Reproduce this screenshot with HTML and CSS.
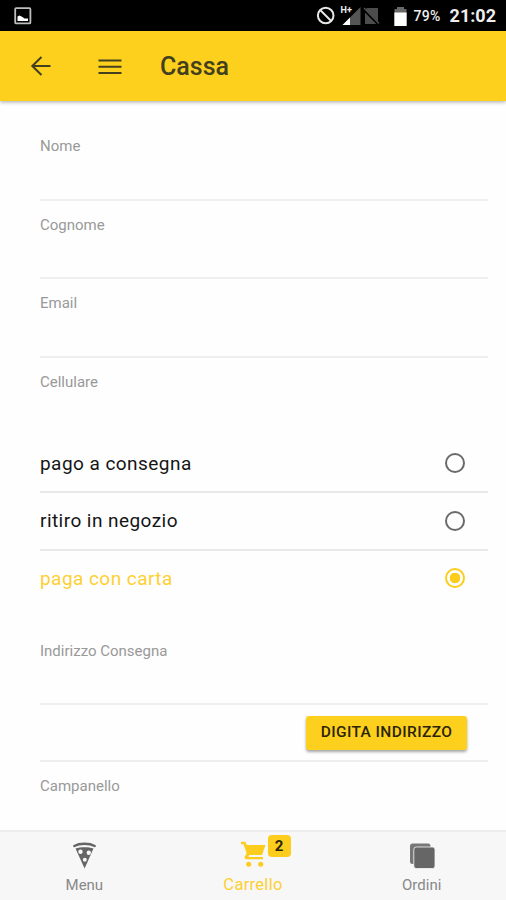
FILE: index.html
```html
<!DOCTYPE html>
<html lang="it">

<head>
    <meta charset="UTF-8">
    <meta name="viewport" content="width=device-width, initial-scale=1.0">
    <title>Cassa</title>
    <link rel="stylesheet" href="styles.css">
</head>

<body>

    <div class="statusbar">
        <svg class="picture" width="18" height="18" viewBox="0 0 18 18">
            <rect x="1.2" y="1.2" width="15.2" height="15.2" rx="1" fill="none" stroke="#bdbdbd" stroke-width="1.8" />
            <path d="M3.500 14V9.500l2-1 3 1.500 2 1.500 3.500 0V14z" fill="#fff" />
        </svg>
        <div class="status-icons">
            <svg width="20" height="20" viewBox="0 0 20 20" fill="none" stroke="#e8e8e8" stroke-width="2">
                <circle cx="9.700" cy="9.500" r="7.800" />
                <path d="M4.200 4l11 11" />
            </svg>
            <div class="signal">
                <span class="network">H+</span>
                <svg width="20" height="18" viewBox="0 0 20 18">
                    <path d="M19.500 0v18h-18z" fill="#555" />
                    <path d="M9 10.500V18H1.500z" fill="#fff" />
                </svg>
            </div>
            <svg class="nosim" width="17" height="18" viewBox="0 0 17 18">
                <path d="M4 1h11v16H2V3z" fill="#4c4c4c" />
                <path d="M0 1.500l16 16" stroke="#000" stroke-width="3" />
                <path d="M1 1l15 15.500" stroke="#555" stroke-width="1.300" />
            </svg>
            <svg class="battery" width="13" height="19" viewBox="0 0 13 19">
                <path d="M3 0h7v2h2.500v4H.5V2H3z" fill="#686868" />
                <path d="M.3 5.500h12.400V19H.3z" fill="#fff" />
            </svg>
            <span class="percent">79%</span>
            <span class="clock">21:02</span>
        </div>
    </div>

    <header class="toolbar">
        <svg class="back" width="22" height="20" viewBox="0 0 22 20" fill="none" stroke="#42401f" stroke-width="2">
            <path d="M20.500 10H2M11.500 1L2.300 10l9.200 9" />
        </svg>
        <svg class="burger" width="24" height="16" viewBox="0 0 24 16" fill="none" stroke="#42401f" stroke-width="2">
            <path d="M.5 1.500h23M.5 7.800h23M.5 14h23" />
        </svg>
        <h1 class="title">Cassa</h1>
    </header>

    <main class="content">
        <div class="field"><label>Nome</label></div>
        <div class="field"><label>Cognome</label></div>
        <div class="field"><label>Email</label></div>
        <div class="field last"><label>Cellulare</label></div>

        <div class="option">
            <span>pago a consegna</span>
            <i class="radio"></i>
        </div>
        <div class="option">
            <span>ritiro in negozio</span>
            <i class="radio"></i>
        </div>
        <div class="option checked">
            <span>paga con carta</span>
            <i class="radio"></i>
        </div>

        <div class="field address"><label>Indirizzo Consegna</label></div>
        <div class="button-row">
            <button class="btn">DIGITA INDIRIZZO</button>
        </div>
        <div class="field"><label>Campanello</label></div>
    </main>

    <nav class="tabs">
        <a class="tab">
            <svg width="24" height="28" viewBox="0 0 24 28">
                <path d="M2.300 5C7.500 2 17.500 2 22.700 5" fill="none" stroke="#656565" stroke-width="2.400" stroke-linecap="round" />
                <path d="M3.500 7.600c5-1.800 13-1.800 18 0L12.600 27.500z" fill="#656565" />
                <circle cx="8.500" cy="10.800" r="2.200" fill="#f7f7f7" />
                <circle cx="16.800" cy="11.800" r="2.200" fill="#f7f7f7" />
                <circle cx="12.800" cy="18.800" r="2" fill="#f7f7f7" />
            </svg>
            <span>Menu</span>
        </a>
        <a class="tab active">
            <svg width="26" height="28" viewBox="0 0 26 28">
                <path d="M1 .8h4.200L7 4H25.500L22 14H9.200L8.300 16H23v2.300H6.800c-2 0-2.700-1.300-1.900-2.900L6.700 12.300 3.600 3.200H1z" fill="#fccd1c" />
                <circle cx="8.700" cy="23.300" r="2.500" fill="#fccd1c" />
                <circle cx="20.700" cy="23.300" r="2.500" fill="#fccd1c" />
            </svg>
            <b class="badge">2</b>
            <span>Carrello</span>
        </a>
        <a class="tab">
            <svg class="albums" width="26" height="28" viewBox="0 0 26 28">
                <rect x="1" y="2.500" width="20.500" height="20.500" rx="2.500" fill="#777" />
                <rect x="4.800" y="6" width="21.200" height="21.500" rx="2.500" fill="#666" stroke="#f7f7f7" stroke-width=".8" />
            </svg>
            <span>Ordini</span>
        </a>
    </nav>

</body>

</html>
```
FILE: styles.css
```css
body {
    margin: 0;
    height: 900px;
    display: flex;
    flex-direction: column;
    overflow: hidden;
    background: #fefefe;
    font-family: Roboto, sans-serif;
}

.statusbar {
    height: 31px;
    flex: none;
    box-sizing: border-box;
    display: flex;
    justify-content: space-between;
    align-items: center;
    padding: 1px 10px 0 14px;
    background: #000;
    color: #eee;
}

.status-icons {
    display: flex;
    align-items: center;
}

.signal {
    position: relative;
    height: 18px;
    margin-left: 5px;
}

.signal svg {
    display: block;
}

.network {
    position: absolute;
    left: 0;
    top: -1px;
    font-size: 9px;
    line-height: 9px;
    font-weight: bold;
}

.nosim {
    margin-left: 2px;
}

.battery {
    margin-left: 14px;
}

.percent {
    margin-left: 7px;
    width: 36px;
    font-size: 14px;
    font-weight: 500;
    letter-spacing: 0.2px;
}

.clock {
    font-size: 18px;
    font-weight: bold;
    line-height: 28px;
}

.toolbar {
    position: relative;
    height: 70px;
    flex: none;
    display: flex;
    align-items: center;
    background: #fdd01e;
    box-shadow: 0 1px 4px rgba(0, 0, 0, 0.35);
}

.back {
    margin-left: 30px;
}

.burger {
    margin: 1px 0 0 46px;
}

.title {
    margin: 0 0 0 38px;
    font-size: 25px;
    font-weight: 500;
    color: #42401f;
}

.content {
    flex: 1;
    min-height: 0;
    overflow: hidden;
    padding: 21px 18px 0 40px;
}

.field {
    height: 78.5px;
    box-sizing: border-box;
    padding-top: 14.4px;
    border-bottom: 2px solid #efefef;
}

.field label {
    display: block;
    font-size: 15px;
    line-height: 20px;
    color: #999;
}

.field.last {
    height: 78px;
    border-bottom-color: transparent;
}

.field.address {
    height: 78.5px;
    margin-top: 18.5px;
    padding-top: 14px;
}

.option {
    height: 57.5px;
    box-sizing: border-box;
    display: flex;
    justify-content: space-between;
    align-items: center;
    padding-right: 23px;
    border-bottom: 2px solid #e9e9e9;
    font-size: 19px;
    letter-spacing: 0.45px;
    color: #151515;
}

.option.checked {
    color: #fdd033;
    border-bottom-color: transparent;
}

.radio {
    width: 20px;
    height: 20px;
    box-sizing: border-box;
    border: 2px solid #6a6a6a;
    border-radius: 50%;
}

.checked .radio {
    border-color: #fccd1c;
    background: radial-gradient(circle, #fccd1c 5px, transparent 5.6px);
}

.button-row {
    height: 56.5px;
    box-sizing: border-box;
    display: flex;
    justify-content: flex-end;
    padding: 10.5px 21px 0 0;
    border-bottom: 2px solid #efefef;
}

.btn {
    width: 161px;
    height: 34px;
    padding: 0 0 1px;
    border: none;
    border-radius: 3px;
    background: #fdd01e;
    box-shadow: 0 2px 3px rgba(0, 0, 0, 0.35);
    font: 500 15.5px Roboto, sans-serif;
    letter-spacing: 0.4px;
    color: #2b2405;
    white-space: nowrap;
}

.tabs {
    height: 70px;
    flex: none;
    box-sizing: border-box;
    display: flex;
    border-top: 2px solid #ededed;
    background: #f7f7f7;
}

.tab {
    position: relative;
    flex: 1;
    display: flex;
    flex-direction: column;
    align-items: center;
    padding-top: 9px;
    font-size: 15px;
    line-height: 20px;
    color: #888;
}

.tab span {
    margin-top: 6px;
}

.tab.active {
    color: #fdd033;
}

.tab.active span {
    font-size: 16.5px;
    letter-spacing: 0.3px;
}

.badge {
    position: absolute;
    left: 99px;
    top: 3px;
    width: 23px;
    height: 22px;
    border-radius: 4px;
    background: #fccd1c;
    color: #2b2405;
    font-size: 15px;
    line-height: 22px;
    text-align: center;
}
```
